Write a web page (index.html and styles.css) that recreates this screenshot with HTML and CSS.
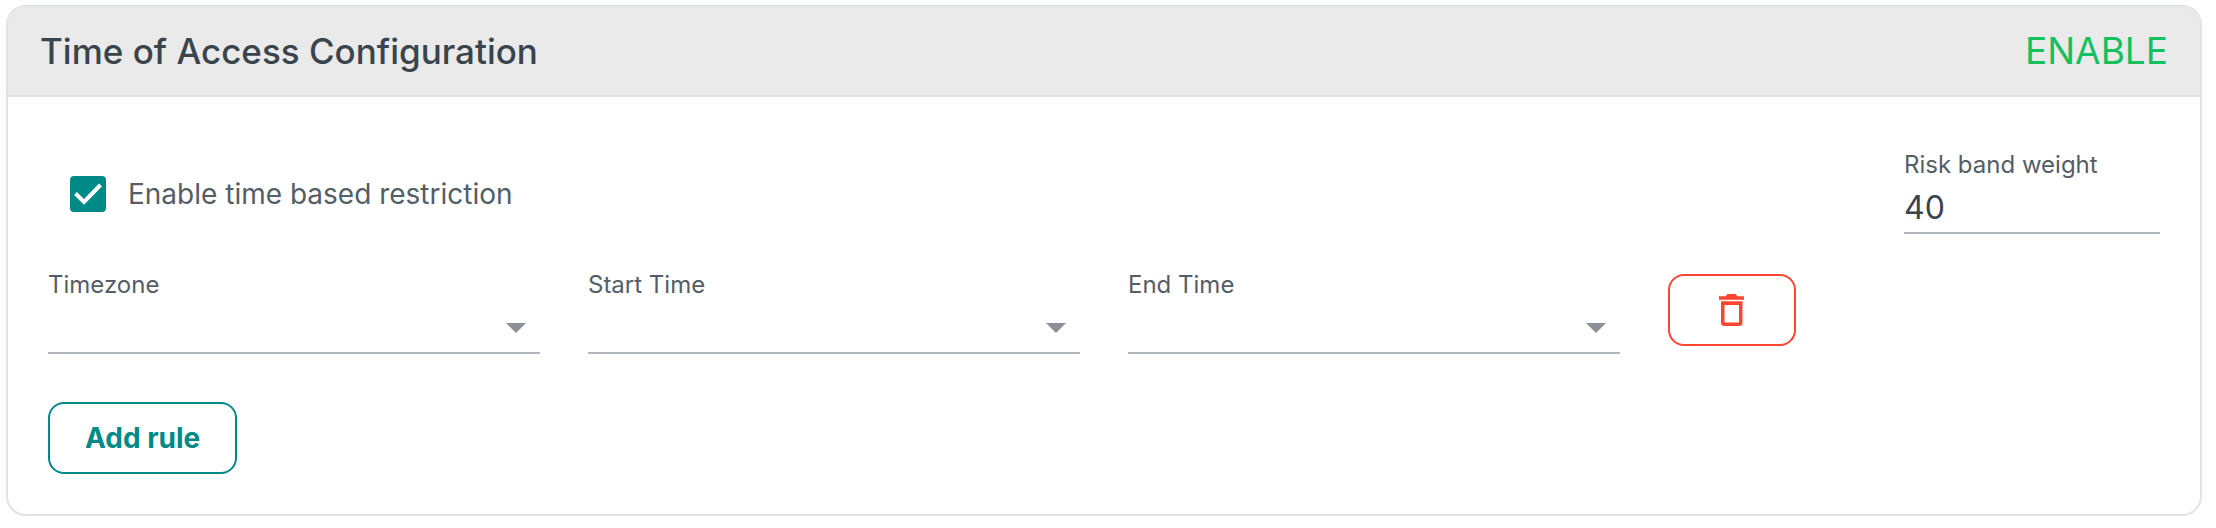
FILE: index.html
```html
<!DOCTYPE html>
<html lang="en">
<head>
<meta charset="utf-8">
<meta name="viewport" content="width=device-width, initial-scale=1">
<title>Time of Access Configuration</title>
<link rel="stylesheet" href="styles.css">
</head>
<body>
<section class="card">
  <header class="card-header">
    <h2 class="card-title">Time of Access Configuration</h2>
    <button type="button" class="enable">ENABLE</button>
  </header>
  <form class="card-body">
    <div class="top-row">
      <label class="check">
        <input type="checkbox" class="check-input" checked>
        <svg class="check-box" viewBox="0 0 36 36" aria-hidden="true"><rect width="36" height="36" rx="4"/><path d="M5.500 17.500L14 26L30.500 9"/></svg>
        <span>Enable time based restriction</span>
      </label>
      <div class="field weight">
        <label class="field-label" for="weight">Risk band weight</label>
        <input class="control" id="weight" type="text" inputmode="numeric" value="40">
      </div>
    </div>
    <div class="rule">
      <div class="field">
        <label class="field-label" for="timezone">Timezone</label>
        <div class="select">
          <select class="control" id="timezone"><option value=""></option></select>
          <svg class="arrow" viewBox="0 0 20 10" aria-hidden="true"><path d="M0 0h20L10 10z"/></svg>
        </div>
      </div>
      <div class="field">
        <label class="field-label" for="start">Start Time</label>
        <div class="select">
          <select class="control" id="start"><option value=""></option></select>
          <svg class="arrow" viewBox="0 0 20 10" aria-hidden="true"><path d="M0 0h20L10 10z"/></svg>
        </div>
      </div>
      <div class="field">
        <label class="field-label" for="end">End Time</label>
        <div class="select">
          <select class="control" id="end"><option value=""></option></select>
          <svg class="arrow" viewBox="0 0 20 10" aria-hidden="true"><path d="M0 0h20L10 10z"/></svg>
        </div>
      </div>
      <button type="button" class="button remove" aria-label="Delete rule">
        <svg class="bin" viewBox="0 0 26 32" aria-hidden="true"><path fill-rule="evenodd" d="M0 2.200h6.500L8.500 0h8L18.500 2.200H25v3.600H0zM2 7.300h21.500v21.200a3.500 3.500 0 0 1-3.500 3.500H5.500a3.500 3.500 0 0 1-3.500-3.500zM5.500 11v17.500H20V11z"/></svg>
      </button>
    </div>
    <button type="button" class="button add">Add rule</button>
  </form>
</section>
</body>
</html>
```
FILE: styles.css
```css
* {
  box-sizing: border-box;
}

body {
  margin: 0;
  padding: 5px 14px 13px 6px;
  background: #fff;
  color: #3a444c;
  font-family: Inter, "Liberation Sans", sans-serif;
}

button,
input,
select {
  font: inherit;
  color: inherit;
}

.card {
  border: 2px solid #e0e4e8;
  border-radius: 20px;
  overflow: hidden;
}

.card-header {
  display: flex;
  align-items: center;
  justify-content: space-between;
  padding: 20px 32px;
  background: #eaeaea;
  border-bottom: 2px solid #e0e4e8;
  line-height: 48px;
}

.card-title {
  margin: 0;
  font-size: 35px;
  font-weight: 500;
}

.enable {
  padding: 0;
  border: 0;
  background: none;
  color: #14c060;
  font-size: 37px;
}

.card-body {
  padding: 51px 40px 40px;
}

.top-row {
  display: flex;
  align-items: flex-end;
  justify-content: space-between;
  margin-bottom: 34px;
}

.check {
  display: flex;
  align-items: center;
  gap: 22px;
  height: 80px;
  padding-left: 22px;
  color: #555d66;
  font-size: 28px;
}

.check-input {
  position: absolute;
  opacity: 0;
}

.check-box {
  width: 36px;
  height: 36px;
  fill: #008a87;
}

.check-box path {
  fill: none;
  stroke: #fff;
  stroke-width: 4;
}

.field {
  display: flex;
  flex-direction: column;
}

.weight {
  width: 256px;
}

.field-label {
  color: #555d66;
  font-size: 24px;
  line-height: 34px;
}

.control {
  width: 100%;
  height: 52px;
  padding: 0;
  border: 0;
  border-bottom: 2px solid #b0b6bb;
  border-radius: 0;
  outline: 0;
  background: none;
  font-size: 32px;
  appearance: none;
}

.rule {
  display: grid;
  grid-template-columns: repeat(4, 1fr);
  gap: 48px;
  margin-bottom: 48px;
}

.select {
  display: grid;
  align-items: center;
}

.select > * {
  grid-area: 1 / 1;
}

.arrow {
  justify-self: end;
  width: 20px;
  height: 10px;
  margin-right: 14px;
  fill: #8a9095;
  pointer-events: none;
}

.button {
  display: flex;
  align-items: center;
  justify-content: center;
  height: 72px;
  border: 2px solid;
  border-radius: 16px;
  background: none;
}

.remove {
  width: 128px;
  margin-top: 6px;
  color: #ff4530;
}

.bin {
  width: 26px;
  height: 32px;
  fill: currentColor;
}

.add {
  padding: 0 35px;
  color: #008a87;
  font-size: 28px;
  font-weight: 700;
}
```
